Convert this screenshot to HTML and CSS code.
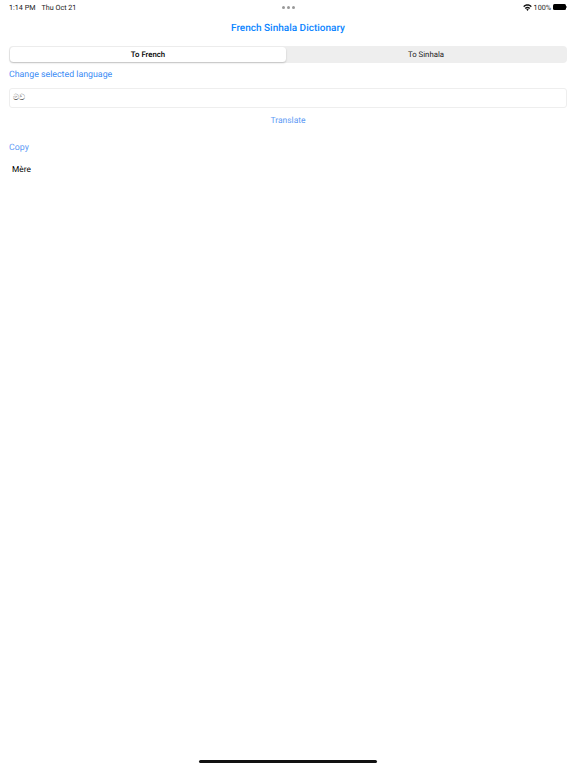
FILE: index.html
```html
<!DOCTYPE html>
<html lang="en">
<head>
  <meta charset="UTF-8">
  <title>French Sinhala Dictionary</title>
  <link rel="stylesheet" href="styles.css">
</head>
<body>

  <!-- Status bar -->
  <div class="status-bar">
    <div class="status-time">
      <span>1:14 PM</span>
      <span>Thu Oct 21</span>
    </div>
    <div class="status-dots">
      <i></i><i></i><i></i>
    </div>
    <div class="status-right">
      <svg class="wifi" width="9" height="7" viewBox="0 0 18 14">
        <path d="M0.5 4.6 C5.2 -0.6 12.8 -0.6 17.500 4.6 L15.6 6.600 C11.900 2.700 6.100 2.700 2.400 6.600 Z" fill="#111"/>
        <path d="M3.600 7.800 C6.600 4.700 11.400 4.700 14.400 7.800 L12.500 9.800 C10.500 7.900 7.500 7.900 5.500 9.800 Z" fill="#111"/>
        <path d="M6.700 11 C8 9.800 10 9.800 11.300 11 L9 13.800 Z" fill="#111"/>
      </svg>
      <span>100%</span>
      <div class="battery"></div>
      <div class="battery-cap"></div>
    </div>
  </div>

  <h1 class="title">French Sinhala Dictionary</h1>

  <!-- Language switch -->
  <div class="segmented">
    <div class="segment active">To French</div>
    <div class="segment">To Sinhala</div>
  </div>

  <a class="link change-link">Change selected language</a>

  <div class="input-box">මව</div>

  <a class="link translate-link">Translate</a>

  <a class="link copy-link">Copy</a>

  <div class="result">Mère</div>

  <div class="home-bar"></div>

</body>
</html>
```

FILE: styles.css
```css
html, body {
  height: 100%;
}

body {
  font-family: Roboto, "Liberation Sans", sans-serif;
  text-rendering: geometricPrecision;
  background: #fff;
  color: #000;
  margin: 0;
  padding: 0 9px;
  box-sizing: border-box;
  display: flex;
  flex-direction: column;
  overflow: hidden;
}

.status-bar {
  display: grid;
  grid-template-columns: 1fr auto 1fr;
  align-items: center;
  height: 14px;
  font-size: 7.200px;
  color: #222;
}

.status-time {
  display: flex;
  gap: 6px;
}

.status-dots {
  display: flex;
  gap: 2px;
}

.status-dots i {
  width: 3px;
  height: 3px;
  border-radius: 50%;
  background: #999;
}

.status-right {
  display: flex;
  justify-content: flex-end;
  align-items: center;
  gap: 2px;
}

.battery {
  width: 13px;
  height: 6px;
  background: #000;
  border-radius: 1.500px;
}

.battery-cap {
  width: 1px;
  height: 2px;
  margin-left: -2px;
  background: #888;
}

.title {
  margin: 7px 0 0;
  height: 15px;
  line-height: 15px;
  text-align: center;
  font-size: 10px;
  font-weight: 500;
  color: #0a84ff;
}

.segmented {
  display: flex;
  margin-top: 10px;
  height: 17px;
  padding: 1px;
  box-sizing: border-box;
  background: #eeeeee;
  border-radius: 4px;
}

.segment {
  flex: 1;
  text-align: center;
  font-size: 7.800px;
  line-height: 16px;
  color: #222;
}

.segment.active {
  flex: 0 0 276px;
  font-weight: 500;
  color: #000;
  background: #fff;
  border-radius: 3.500px;
  box-shadow: 0 1px 2px rgba(0,0,0,0.2);
}

.link {
  display: block;
  color: #3b8cf5;
  line-height: 12px;
}

.change-link {
  margin-top: 6px;
  font-size: 8.800px;
}

.input-box {
  margin-top: 7px;
  height: 20px;
  line-height: 18px;
  padding: 0 3px;
  box-sizing: border-box;
  font-size: 8.500px;
  color: #444;
  border: 1px solid #eeeeee;
  border-radius: 3px;
}

.translate-link {
  margin-top: 7px;
  text-align: center;
  font-size: 8.500px;
  color: #5c9af5;
}

.copy-link {
  margin-top: 15px;
  font-size: 8.800px;
  color: #5c9af5;
}

.result {
  margin-top: 10px;
  padding-left: 3px;
  font-size: 8.300px;
  line-height: 12px;
}

.home-bar {
  margin: auto auto 5px;
  width: 178px;
  height: 3px;
  background: #111;
  border-radius: 2px;
}
```
